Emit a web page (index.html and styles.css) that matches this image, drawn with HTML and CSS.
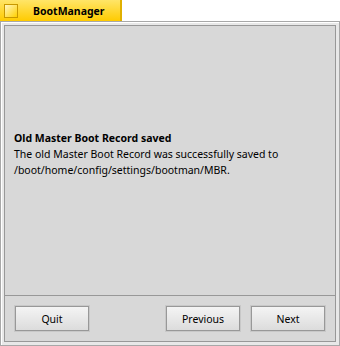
FILE: index.html
```html
<!DOCTYPE html>
<html lang="en">
<head>
  <meta charset="UTF-8">
  <title>BootManager</title>
  <link rel="stylesheet" href="styles.css">
</head>
<body>

  <div class="tab">
    <span class="tab-box"></span>
    <span class="tab-title">BootManager</span>
  </div>

  <div class="frame">
    <div class="frame-inner">
      <div class="panel">
        <div class="message">
          <div class="msg-title">Old Master Boot Record saved</div>
          <div class="msg-text">The old Master Boot Record was successfully saved to<br>/boot/home/config/settings/bootman/MBR.</div>
        </div>
      </div>
      <div class="button-bar">
        <button class="btn">Quit</button>
        <span class="spacer"></span>
        <button class="btn">Previous</button>
        <button class="btn">Next</button>
      </div>
    </div>
  </div>

</body>
</html>
```

FILE: styles.css
```css
body {
  margin: 0;
  padding: 0;
  width: 340px;
  height: 346px;
  background: #ffffff;
  font-family: "Noto Sans", "DejaVu Sans", sans-serif;
  font-size: 10.5px;
  color: #000;
  overflow: hidden;
}

.tab {
  width: 122px;
  height: 21px;
  box-sizing: border-box;
  background: linear-gradient(#ffe568, #ffcb00);
  border-right: 2px solid #e0b000;
  display: flex;
  align-items: center;
}

.tab-box {
  width: 12px;
  height: 12px;
  margin-left: 4px;
  border: 1px solid #c89800;
  background: linear-gradient(135deg, #fff6c0, #ffd000);
}

.tab-title {
  margin-left: 15px;
  font-weight: bold;
  font-size: 10.5px;
}

.frame {
  width: 340px;
  height: 325px;
  box-sizing: border-box;
  border: 1px solid #a8a8a8;
  background: #e8e8e8;
  padding: 3px;
  box-shadow: inset 1px 1px 0 #ffffff;
}

.frame-inner {
  height: 100%;
  box-sizing: border-box;
  border: 1px solid #989898;
  background: #d8d8d8;
  display: flex;
  flex-direction: column;
}

.panel {
  flex: 1;
  border-bottom: 1px solid #989898;
  display: flex;
  align-items: center;
  padding-left: 9px;
  padding-bottom: 14px;
}

.msg-title {
  font-weight: bold;
  line-height: 16px;
}

.msg-text {
  line-height: 16px;
}

.button-bar {
  height: 45px;
  display: flex;
  align-items: center;
  padding: 0 10px;
  gap: 11px;
}

.spacer {
  flex: 1;
}

.btn {
  width: 74px;
  height: 25px;
  font-family: "Noto Sans", "DejaVu Sans", sans-serif;
  font-size: 10.5px;
  color: #000;
  border: 1px solid #989898;
  background: linear-gradient(#f4f4f4, #dcdcdc);
  box-shadow: 0 0 0 1px #c8c8c8;
  padding: 0;
}
```
